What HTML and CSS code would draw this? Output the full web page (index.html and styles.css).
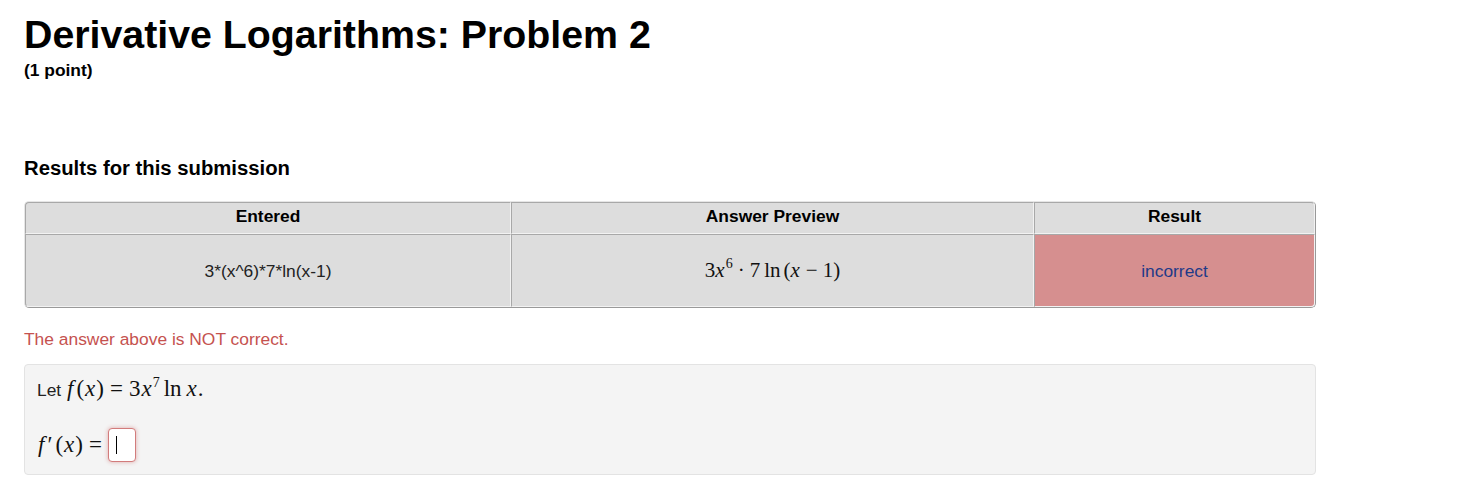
FILE: index.html
```html
<!doctype html>
<html lang="en">
  <head>
    <meta charset="UTF-8" />
    <title>Derivative Logarithms: Problem 2</title>
    <link rel="stylesheet" href="styles.css">
  </head>
  <body>
    <div class="problem-page">
      <h1 class="problem-title">Derivative Logarithms: Problem 2</h1>
      <div class="problem-value">(1 point)</div>

      <h3 class="results-title">Results for this submission</h3>

      <table class="attempt-results">
        <tr>
          <th class="col-entered">Entered</th>
          <th class="col-preview">Answer Preview</th>
          <th class="col-result">Result</th>
        </tr>
        <tr>
          <td>3*(x^6)*7*ln(x-1)</td>
          <td><span class="math">3<i>x</i><sup>6</sup><span class="op">&middot;</span>7<span class="fn">ln</span>(<i>x</i><span class="op">&minus;</span>1)</span></td>
          <td class="result-incorrect">incorrect</td>
        </tr>
      </table>

      <p class="attempt-message">The answer above is NOT correct.</p>

      <div class="problem-body">
        <p class="problem-line">Let <span class="math big"><i class="f">f</i>(<i>x</i>)<span class="rel">=</span>3<i>x</i><sup>7</sup><span class="fn">ln</span><i>x</i>.</span></p>
        <p class="answer-line">
          <span class="math big"><i class="f">f</i><span class="prime">&prime;</span>(<i>x</i>)<span class="rel">=</span></span>
          <span class="answer-input"><span class="caret"></span></span>
        </p>
      </div>
    </div>
  </body>
</html>
```

FILE: styles.css
```css
body {
  margin: 0;
  font-family: "Liberation Sans", Arial, sans-serif;
  font-size: 17.4px;
  line-height: 20px;
  color: #222;
  background: #fff;
}
.problem-page {
  width: 1292px;
  padding: 13px 0 0 24px;
}
.problem-title {
  margin: 0;
  font-size: 39.3px;
  line-height: 43px;
  font-weight: bold;
  color: #000;
}
.problem-value {
  margin-top: 4px;
  font-weight: bold;
  color: #000;
}
.results-title {
  margin: 76px 0 21px;
  font-size: 20.3px;
  line-height: 24px;
  color: #000;
}

/* results table */
.attempt-results {
  width: 1292px;
  table-layout: fixed;
  border-collapse: separate;
  border-spacing: 0;
  border: 1px solid;
  border-color: #e6e6e6 #999 #999 #e6e6e6;
  border-radius: 5px;
  background: #ddd;
  text-align: center;
}
.attempt-results th,
.attempt-results td {
  box-sizing: border-box;
  border: 1px solid;
  border-color: #a8a8a8 #f2f2f2 #f2f2f2 #a8a8a8;
  background: #ddd;
}
.attempt-results th {
  padding: 3px 5px 7px;
  color: #000;
}
.attempt-results td {
  padding: 25px 5px;
}
.attempt-results tr:first-child th:first-child { border-top-left-radius: 4px; }
.attempt-results tr:first-child th:last-child { border-top-right-radius: 4px; }
.attempt-results tr:last-child td:first-child { border-bottom-left-radius: 4px; }
.attempt-results tr:last-child td:last-child { border-bottom-right-radius: 4px; }
.col-entered { width: 486px; }
.col-preview { width: 523px; }
.col-result { width: 281px; }
.attempt-results td.result-incorrect {
  background: #d68f8f;
  color: #1f3a88;
}

/* math */
.math {
  font-family: "Liberation Serif", "Times New Roman", serif;
  font-size: 21px;
  color: #111;
}
.math i {
  padding-right: 1px;
}
.math sup {
  font-size: 14px;
  line-height: 0;
  vertical-align: 9px;
}
.math .op {
  padding: 0 5px;
}
.math .rel {
  padding: 0 6px;
}
.math .fn {
  padding: 0 3px 0 4px;
}
.math.big {
  font-size: 23px;
}
.math.big i {
  padding: 0 1px;
}
.math.big i.f {
  padding: 0 3px 0 1px;
}
.math.big .rel {
  padding: 0 6px;
}
.math.big .fn {
  padding: 0 4px;
}
.math.big .prime {
  padding-right: 3px;
}

.attempt-message {
  margin: 21px 0 15px;
  color: #c5524f;
}

/* problem text */
.problem-body {
  border: 1px solid #e3e3e3;
  border-radius: 4px;
  background: #f4f4f4;
  padding: 12px 11px 12px 12px;
}
.problem-line {
  margin: 0;
  line-height: 24px;
}
.answer-line {
  display: flex;
  align-items: center;
  margin: 26px 0 0;
  height: 34px;
}
.answer-input {
  box-sizing: border-box;
  display: flex;
  align-items: center;
  width: 28px;
  height: 34px;
  padding-left: 7px;
  border: 1px solid #d27c7c;
  border-radius: 4px;
  background: #fff;
  box-shadow: 0 0 4px rgba(200, 80, 80, 0.45);
}
.caret {
  width: 1px;
  height: 18px;
  background: #000;
}
```
